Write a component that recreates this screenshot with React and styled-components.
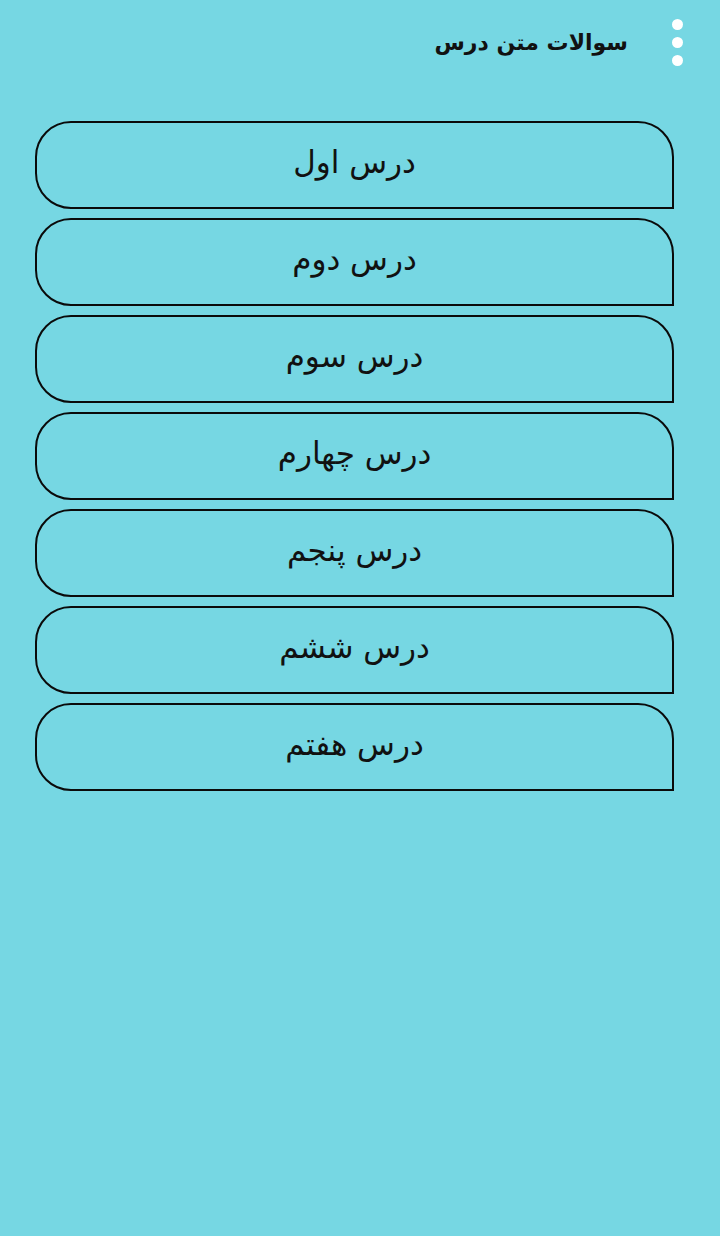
import styled, { createGlobalStyle } from "styled-components";

const GlobalStyle = createGlobalStyle`
  html, body {
    margin: 0;
    padding: 0;
    background: #76d7e3;
  }
  body {
    font-family: "DejaVu Sans", "Noto Sans", sans-serif;
  }
`;

const Page = styled.div`
  width: 720px;
  min-height: 1236px;
  background: #76d7e3;
  direction: rtl;
`;

const Toolbar = styled.div`
  height: 84px;
  display: flex;
  align-items: center;
  padding: 0 37px 0 0;
  gap: 44px;
  box-sizing: border-box;
`;

const Menu = styled.div`
  display: flex;
  flex-direction: column;
  gap: 7px;
`;

const Dot = styled.span`
  width: 11px;
  height: 11px;
  border-radius: 50%;
  background: #ffffff;
`;

const Title = styled.div`
  font-size: 22px;
  font-weight: bold;
  color: #111;
`;

const List = styled.div`
  display: flex;
  flex-direction: column;
  gap: 9px;
  padding: 37px 46px 0 35px;
`;

const LessonButton = styled.button`
  height: 88px;
  width: 100%;
  box-sizing: border-box;
  background: transparent;
  border: 2px solid #0a0a0a;
  border-radius: 36px 36px 0 36px;
  font-family: "DejaVu Sans", "Noto Sans", sans-serif;
  font-size: 31px;
  color: #111;
  direction: rtl;
  display: flex;
  align-items: center;
  justify-content: center;
  padding: 0 0 6px;
  cursor: pointer;
`;

const lessons = ["درس اول", "درس دوم", "درس سوم", "درس چهارم", "درس پنجم", "درس ششم", "درس هفتم"];

export default function App() {
  return (
    <Page>
      <GlobalStyle />
      <Toolbar>
        <Menu>
          <Dot />
          <Dot />
          <Dot />
        </Menu>
        <Title>سوالات متن درس</Title>
      </Toolbar>
      <List>
        {lessons.map((l) => (
          <LessonButton key={l}>{l}</LessonButton>
        ))}
      </List>
    </Page>
  );
}
